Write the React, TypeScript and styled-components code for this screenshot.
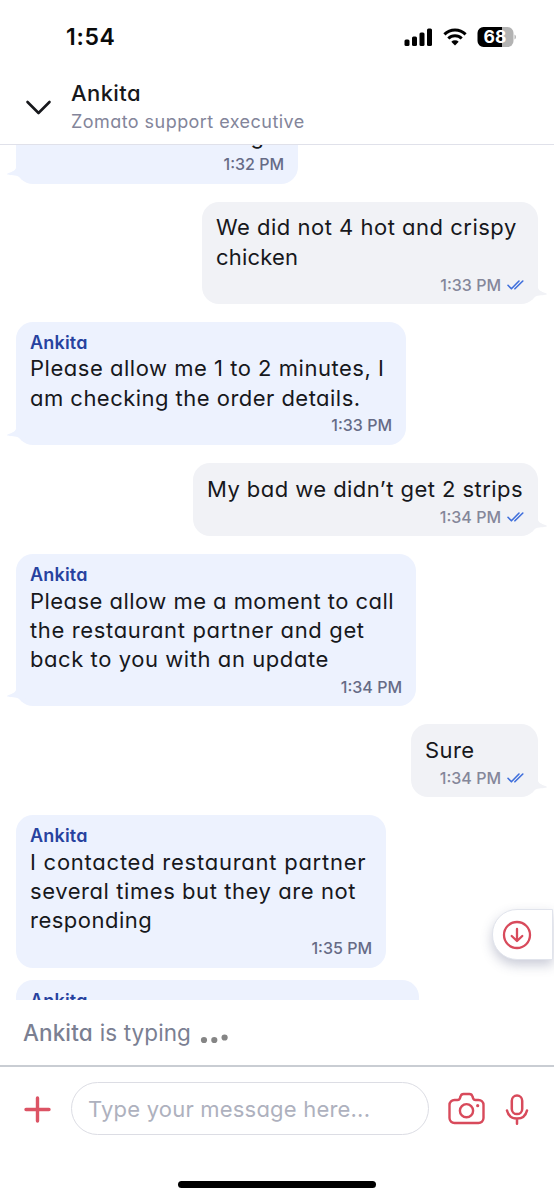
import React from "react";
import styled, { createGlobalStyle } from "styled-components";

const GlobalStyle = createGlobalStyle`
  * { box-sizing: border-box; }
  body {
    margin: 0;
    background: #fff;
    font-family: Inter, "Liberation Sans", sans-serif;
    font-feature-settings: "cv11" 1;
    color: #17181c;
  }
`;

const Screen = styled.div`
  width: 554px;
  height: 1200px;
  display: flex;
  flex-direction: column;
  overflow: hidden;
  position: relative;
  background: #fff;
`;

const StatusBar = styled.div`
  height: 72px;
  flex: none;
  display: flex;
  align-items: center;
  justify-content: space-between;
  padding: 2px 38px 0 66px;
`;

const Clock = styled.span`
  font-size: 23px;
  font-weight: 600;
  letter-spacing: 0.7px;
  color: #0b0b0b;
`;

const StatusIcons = styled.div`
  display: flex;
  align-items: center;
  gap: 10px;
`;

const Header = styled.header`
  height: 73px;
  flex: none;
  display: flex;
  align-items: flex-start;
  padding: 7px 0 0 25px;
  border-bottom: 1px solid #e0e1ea;
`;

const Chevron = styled.svg`
  margin: 20px 19px 0 0;
`;

const Name = styled.div`
  font-size: 22px;
  line-height: 29px;
  font-weight: 500;
  letter-spacing: 0.4px;
`;

const Role = styled.div`
  font-size: 18px;
  line-height: 27px;
  color: #83859a;
  letter-spacing: 0.45px;
`;

const Chat = styled.main`
  flex: none;
  height: 855px;
  overflow: hidden;
  padding: 0 16px;
`;

const List = styled.div`
  display: flex;
  flex-direction: column;
  gap: 18px;
  margin-top: -32.8px;
`;

const Bubble = styled.article<{ $mine?: boolean; $width: number; $tight?: boolean }>`
  position: relative;
  flex: none;
  align-self: ${(p) => (p.$mine ? "flex-end" : "flex-start")};
  width: ${(p) => p.$width}px;
  margin-top: ${(p) => (p.$tight ? -5.5 : 0)}px;
  padding: ${(p) => (p.$mine ? "11.7px 14px 9.3px" : "10px 14px 9.8px")};
  border-radius: 17px;
  background: ${(p) => (p.$mine ? "#f1f2f6" : "#edf2fe")};
`;

const Tail = styled.svg<{ $mine?: boolean }>`
  position: absolute;
  bottom: 3px;
  ${(p) => (p.$mine ? "right: -9px; transform: scaleX(-1);" : "left: -9px;")}
`;

const Sender = styled.div`
  font-size: 18px;
  line-height: 22.5px;
  font-weight: 600;
  color: #27429f;
  letter-spacing: 0.2px;
`;

const Line = styled.div<{ $spacing: number }>`
  font-size: 22px;
  line-height: 29.2px;
  white-space: nowrap;
  letter-spacing: ${(p) => p.$spacing}px;
`;

const Meta = styled.div<{ $mine?: boolean }>`
  display: flex;
  justify-content: flex-end;
  align-items: center;
  gap: 6px;
  margin-top: ${(p) => (p.$mine ? 2.8 : 2.5)}px;
  font-size: 16px;
  line-height: 20px;
  font-weight: 500;
  color: ${(p) => (p.$mine ? "#85879a" : "#666b86")};
`;

const ScrollDown = styled.button`
  position: absolute;
  right: 1px;
  top: 909px;
  width: 61px;
  height: 51px;
  padding: 0 0 0 9px;
  border: 1px solid #e1e4ec;
  border-radius: 25px 0 0 25px;
  background: #fff;
  box-shadow: 0 5px 12px rgba(60, 70, 110, 0.28);
  display: flex;
  align-items: center;
`;

const Typing = styled.div`
  height: 67px;
  flex: none;
  display: flex;
  align-items: flex-start;
  padding: 18px 0 0 23px;
  border-bottom: 2px solid #c9cdd3;
  font-size: 22.5px;
  line-height: 30px;
  color: #7b7f92;
  letter-spacing: 0.1px;
`;

const TypingName = styled.span`
  font-weight: 500;
  margin-right: 7px;
`;

const Dots = styled.svg`
  margin: 15px 0 0 9px;
`;

const Composer = styled.footer`
  flex: none;
  height: 83px;
  display: flex;
  align-items: center;
  padding: 0 25px 0 24px;
`;

const AddIcon = styled.svg`
  margin-top: 2px;
`;

const Field = styled.div`
  width: 358px;
  height: 53px;
  margin: 0 19px 0 20px;
  padding: 0 16px;
  border: 1px solid #dcdde4;
  border-radius: 27px;
  display: flex;
  align-items: center;
  font-size: 22px;
  color: #aeb1be;
  letter-spacing: 0.2px;
  white-space: nowrap;
`;

const MicIcon = styled.svg`
  margin: 2px 0 0 20px;
`;

const HomeIndicator = styled.div`
  width: 198px;
  height: 7px;
  margin: 31px 0 0 178px;
  border-radius: 4px;
  background: #000;
`;

type Text = [string, number];
interface Message {
  mine?: boolean;
  width: number;
  lines: Text[];
  time: string;
  tight?: boolean;
  sender?: boolean;
  tail?: boolean;
}

const messages: Message[] = [
  { width: 282, sender: false, lines: [["What item is missing", 1]], time: "1:32 PM" },
  { mine: true, width: 336, lines: [["We did not 4 hot and crispy", 0.5], ["chicken", 0.2]], time: "1:33 PM" },
  { width: 390, lines: [["Please allow me 1 to 2 minutes, I", 0.52], ["am checking the order details.", 0.47]], time: "1:33 PM" },
  { mine: true, width: 345, lines: [["My bad we didn’t get 2 strips", 0.44]], time: "1:34 PM" },
  {
    width: 400,
    lines: [["Please allow me a moment to call", 0.46], ["the restaurant partner and get", 0.64], ["back to you with an update", 0.57]],
    time: "1:34 PM",
  },
  { mine: true, width: 127, lines: [["Sure", 0.4]], time: "1:34 PM" },
  {
    width: 370,
    lines: [["I contacted restaurant partner", 0.75], ["several times but they are not", 0.57], ["responding", 0.5]],
    time: "1:35 PM",
    tail: false,
  },
  { width: 403, lines: [], time: "", tight: true },
];

const ReadTicks = () => (
  <svg width="17" height="12" viewBox="0 0 17 12" fill="none" stroke="#3f6fdc" strokeWidth="1.6" strokeLinecap="round" strokeLinejoin="round">
    <path d="M1 6.3 4.4 9.8 12 2M7.9 9.8 15.8 2" />
  </svg>
);

const ChatMessage = ({ mine, width, lines, time, tight, sender = !mine, tail = true }: Message) => (
  <Bubble $mine={mine} $width={width} $tight={tight}>
    {sender && <Sender>Ankita</Sender>}
    {lines.map(([text, spacing], i) => (
      <Line key={i} $spacing={spacing}>{text}</Line>
    ))}
    <Meta $mine={mine}>
      {time}
      {mine && <ReadTicks />}
    </Meta>
    {tail && (
      <Tail $mine={mine} width="22" height="13" viewBox="0 0 22 13" fill={mine ? "#f1f2f6" : "#edf2fe"}>
        <path d="M9 0C8 3 4 4 .5 5.5C-.5 6.5 1 7 3 7C7 7.500 12 7 15 12L22 4V0Z" />
      </Tail>
    )}
  </Bubble>
);

export default function App() {
  return (
    <Screen>
      <GlobalStyle />
      <StatusBar>
        <Clock>1:54</Clock>
        <StatusIcons>
          <svg width="29" height="19" viewBox="0 0 29 19" fill="#000">
            <rect x="0.5" y="11.500" width="5" height="6.500" rx="1.500" />
            <rect x="8" y="8.500" width="5" height="9.500" rx="1.500" />
            <rect x="15.500" y="4.500" width="5" height="13.500" rx="1.500" />
            <rect x="23" y="0.500" width="5" height="17.500" rx="1.500" />
          </svg>
          <svg width="24" height="18" viewBox="0 0 24 18" fill="none" stroke="#000" strokeWidth="3">
            <path d="M1.400 6.400a15.200 15.200 0 0 1 21.200 0M5.300 10.500a9.600 9.600 0 0 1 13.400 0" />
            <path d="M8.300 13.700a5.400 5.400 0 0 1 7.400 0L12 17.400Z" fill="#000" stroke="none" />
          </svg>
          <svg width="39" height="20" viewBox="0 0 39 20">
            <path d="M6.500 0H25V20H6.500A6 6 0 0 1 .5 14V6A6 6 0 0 1 6.500 0Z" fill="#000" />
            <path d="M25 0h5.500a6 6 0 0 1 6 6v8a6 6 0 0 1-6 6H25Z" fill="#b3b3b3" />
            <path d="M37.500 7.500q1.500.8 1.500 2.500t-1.500 2.500Z" fill="#b3b3b3" />
            <text x="18" y="16.200" textAnchor="middle" fontSize="17.500" fontWeight="700" fill="#fff">68</text>
          </svg>
        </StatusIcons>
      </StatusBar>
      <Header>
        <Chevron width="27" height="17" viewBox="0 0 27 17" fill="none" stroke="#17181c" strokeWidth="2.600" strokeLinecap="round" strokeLinejoin="round">
          <path d="M2.500 3 13.500 14 24.500 3" />
        </Chevron>
        <div>
          <Name>Ankita</Name>
          <Role>Zomato support executive</Role>
        </div>
      </Header>
      <Chat>
        <List>
          {messages.map((message, i) => (
            <ChatMessage key={i} {...message} />
          ))}
        </List>
      </Chat>
      <Typing>
        <TypingName>Ankita</TypingName>
        is typing
        <Dots width="29" height="14" viewBox="0 0 29 14" fill="#858585">
          <circle cx="4" cy="7" r="3.100" />
          <circle cx="14.300" cy="7" r="3.100" />
          <circle cx="24.600" cy="4.500" r="3.100" />
        </Dots>
      </Typing>
      <Composer>
        <AddIcon width="27" height="27" viewBox="0 0 27 27" stroke="#dc5364" strokeWidth="3.400" strokeLinecap="round">
          <path d="M13.500 2V25M2 13.500H25" />
        </AddIcon>
        <Field>Type your message here...</Field>
        <svg width="37" height="33" viewBox="0 0 37 33" fill="none" stroke="#d84a5b" strokeWidth="2.400" strokeLinejoin="round">
          <path d="M6.500 8H9.500Q11.500 8 12 6L12.500 4.500Q13.200 2 15.500 2H21.500Q23.800 2 24.500 4.500L25 6Q25.500 8 27.500 8H30.500A5 5 0 0 1 35.500 13V26A5 5 0 0 1 30.500 31H6.500A5 5 0 0 1 1.500 26V13A5 5 0 0 1 6.500 8Z" />
          <circle cx="18.500" cy="18.700" r="6.600" />
          <circle cx="29.700" cy="13.700" r="1.600" fill="#d84a5b" stroke="none" />
        </svg>
        <MicIcon width="24" height="32" viewBox="0 0 24 32" fill="none" stroke="#d84a5b" strokeWidth="2.500" strokeLinecap="round">
          <rect x="6.800" y="1.600" width="10.400" height="18.500" rx="5.200" />
          <path d="M2 16.500C3.200 21.500 7 24.600 12 24.600S20.800 21.500 22 16.500M12 24.600V29.800" />
        </MicIcon>
      </Composer>
      <HomeIndicator />
      <ScrollDown aria-label="Scroll to latest">
        <svg width="30" height="30" viewBox="0 0 30 30" fill="none" stroke="#d84a5b" strokeWidth="2.300" strokeLinecap="round" strokeLinejoin="round">
          <circle cx="15" cy="15" r="13" />
          <path d="M15 9V21M9.700 16 15 21 20.300 16" />
        </svg>
      </ScrollDown>
    </Screen>
  );
}
